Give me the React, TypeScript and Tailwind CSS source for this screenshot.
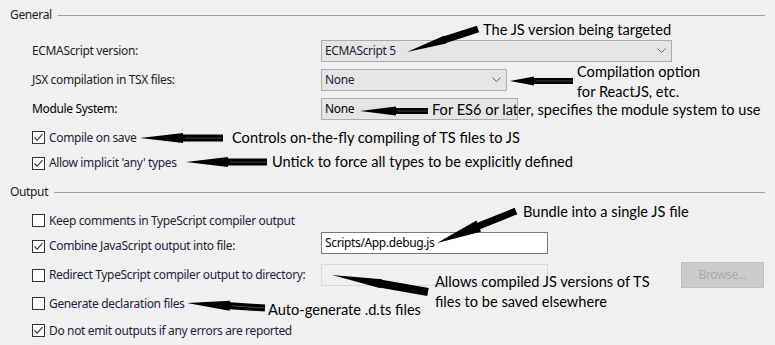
import React from 'react';

type Pt = [number, number];

function arrowPoints(tip: Pt, tail: Pt, headLen: number, headW: number, shaftW: number) {
  const dx = tail[0] - tip[0];
  const dy = tail[1] - tip[1];
  const len = Math.hypot(dx, dy);
  const ux = dx / len;
  const uy = dy / len;
  const nx = -uy;
  const ny = ux;
  const hb: Pt = [tip[0] + ux * headLen, tip[1] + uy * headLen];
  const p = (b: Pt, w: number): string => `${b[0] + nx * w},${b[1] + ny * w}`;
  return [
    `${tip[0]},${tip[1]}`,
    p(hb, headW / 2),
    p(hb, shaftW / 2),
    p(tail, shaftW / 2),
    p(tail, -shaftW / 2),
    p(hb, -shaftW / 2),
    p(hb, -headW / 2),
  ].join(' ');
}

const arrows: { tip: Pt; tail: Pt; head: number; hw: number; sw: number; stripe?: boolean }[] = [
  { tip: [407, 52], tail: [478, 29], head: 40, hw: 8, sw: 7 },
  { tip: [510, 81], tail: [573, 81], head: 24, hw: 9, sw: 6, stripe: true },
  { tip: [360, 111], tail: [428, 111], head: 36, hw: 9, sw: 6, stripe: true },
  { tip: [140, 138], tail: [223, 138], head: 43, hw: 10, sw: 7, stripe: true },
  { tip: [186, 162], tail: [267, 162], head: 42, hw: 10, sw: 7, stripe: true },
  { tip: [437, 243], tail: [516, 211], head: 45, hw: 12, sw: 7 },
  { tip: [332, 275], tail: [428, 292], head: 50, hw: 9, sw: 8 },
  { tip: [187, 303], tail: [265, 308], head: 43, hw: 10, sw: 7, stripe: true },
];

function Chevron() {
  return (
    <svg width="9" height="6" viewBox="0 0 9 6" className="shrink-0">
      <path d="M0.5 0.5 L4.5 4.5 L8.5 0.5" fill="none" stroke="#606060" strokeWidth="1" />
    </svg>
  );
}

function Check({ checked }: { checked: boolean }) {
  return (
    <div className="w-[13px] h-[13px] bg-white border border-[#333333] flex items-center justify-center shrink-0">
      {checked && (
        <svg width="11" height="11" viewBox="0 0 11 11">
          <path d="M1.5 5.5 L4.2 8.2 L9.5 2.2" fill="none" stroke="#333333" strokeWidth="1.1" />
        </svg>
      )}
    </div>
  );
}

function CheckRow({ checked, label, h, children }: { checked: boolean; label: string; h: string; children?: React.ReactNode }) {
  return (
    <div className={`flex items-center pl-[32px] ${h}`}>
      <Check checked={checked} />
      <span className="ml-[4px] text-[#1e1e3c] w-[272px] shrink-0 whitespace-nowrap">{label}</span>
      {children}
    </div>
  );
}

function Header({ title, h }: { title: string; h: string }) {
  return (
    <div className={`flex items-center pl-[10px] pr-[10px] ${h}`}>
      <span className="text-[#1e1e1e]">{title}</span>
      <div className="flex-1 h-px bg-[#a0a0a0] ml-[6px]" />
    </div>
  );
}

export default function App() {
  return (
    <div
      className="relative w-[775px] h-[345px] bg-[#f0f0f0] overflow-hidden text-[12px] tracking-[-0.35px]"
      style={{ fontFamily: '"Noto Sans", "Open Sans", sans-serif' }}
    >
      <div className="flex flex-col">
        <Header title="General" h="h-[30px]" />

        <div className="flex items-center h-[22px] mt-[10px] pl-[32px]">
          <span className="w-[289px] shrink-0 text-[#1e1e1e]">ECMAScript version:</span>
          <div className="w-[351px] h-[22px] bg-[#e5e5e5] border border-[#acacac] flex items-center justify-between pl-[3px] pr-[5px]">
            <span className="text-[#1e1e3c]">ECMAScript 5</span>
            <Chevron />
          </div>
        </div>

        <div className="flex items-center h-[22px] mt-[7px] pl-[32px]">
          <span className="w-[289px] shrink-0 text-[#1e1e1e]">JSX compilation in TSX files:</span>
          <div className="w-[186px] h-[22px] bg-[#e5e5e5] border border-[#acacac] flex items-center justify-between pl-[3px] pr-[5px]">
            <span className="text-[#1e1e3c]">None</span>
            <Chevron />
          </div>
        </div>

        <div className="flex items-center h-[22px] mt-[7px] pl-[32px]">
          <span className="w-[289px] shrink-0 text-black">Module System:</span>
          <div className="w-[197px] h-[22px] bg-[#e5e5e5] border border-[#adadad] flex items-center pl-[3px]">
            <span className="text-black">None</span>
          </div>
        </div>

        <div className="mt-[5px]">
          <CheckRow checked label="Compile on save" h="h-[25px]" />
          <CheckRow checked label="Allow implicit 'any' types" h="h-[26px]" />
        </div>

        <Header title="Output" h="h-[24px] mt-[4px]" />

        <CheckRow checked={false} label="Keep comments in TypeScript compiler output" h="h-[25px] mt-[4px]" />
        <CheckRow checked label="Combine JavaScript output into file:" h="h-[26px]">
          <div className="w-[227px] h-[22px] mb-[6px] bg-white border border-[#7a7a7a] flex items-center pl-[3px]">
            <span className="text-black">Scripts/App.debug.js</span>
          </div>
        </CheckRow>
        <CheckRow checked={false} label="Redirect TypeScript compiler output to directory:" h="h-[26px] mt-[3px]">
          <div className="w-[227px] h-[22px] mb-[1px] bg-[#f0f0f0] border border-[#d9d9d9]" />
          <div className="ml-[133px] w-[83px] h-[26px] bg-[#cccccc] border border-[#bfbfbf] flex items-center justify-center">
            <span className="text-[#a8a8a8]">Browse...</span>
          </div>
        </CheckRow>
        <CheckRow checked={false} label="Generate declaration files" h="h-[27px] mt-[2px]" />
        <CheckRow checked label="Do not emit outputs if any errors are reported" h="h-[27px]" />
      </div>

      <svg className="absolute inset-0" width="775" height="345" viewBox="0 0 775 345">
        {arrows.map((a, i) => (
          <g key={i}>
            <polygon points={arrowPoints(a.tip, a.tail, a.head, a.hw, a.sw)} fill="#000" />
            {a.stripe && (
              <line
                x1={a.tip[0] + a.head + 2}
                y1={a.tip[1] + ((a.tail[1] - a.tip[1]) * (a.head + 2)) / (a.tail[0] - a.tip[0])}
                x2={a.tail[0]}
                y2={a.tail[1]}
                stroke="#555"
                strokeWidth="0.8"
              />
            )}
          </g>
        ))}
      </svg>

      <div
        className="absolute inset-0 text-[14.6px] leading-[20px] tracking-normal text-black"
        style={{ fontFamily: 'Lato, "Open Sans", sans-serif' }}
      >
        <div className="absolute left-[483px] top-[20px] whitespace-nowrap">The JS version being targeted</div>
        <div className="absolute left-[577px] top-[62px] whitespace-nowrap">
          Compilation option
          <br />
          for ReactJS, etc.
        </div>
        <div className="absolute left-[432px] top-[100px] whitespace-nowrap">For ES6 or later, specifies the module system to use</div>
        <div className="absolute left-[232px] top-[128px] whitespace-nowrap">Controls on-the-fly compiling of TS files to JS</div>
        <div className="absolute left-[272px] top-[152px] whitespace-nowrap">Untick to force all types to be explicitly defined</div>
        <div className="absolute left-[523px] top-[202px] whitespace-nowrap">Bundle into a single JS file</div>
        <div className="absolute left-[435px] top-[272px] whitespace-nowrap">
          Allows compiled JS versions of TS
          <br />
          files to be saved elsewhere
        </div>
        <div className="absolute left-[268px] top-[300px] whitespace-nowrap">Auto-generate .d.ts files</div>
      </div>
    </div>
  );
}
